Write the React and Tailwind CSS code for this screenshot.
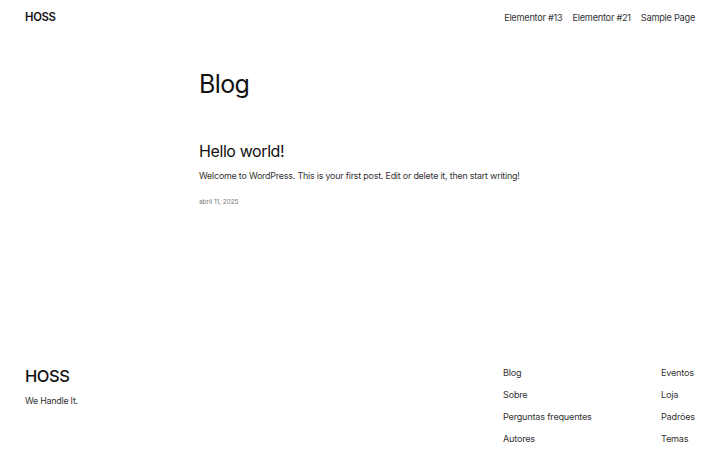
export default function App() {
  const footerA = ["Blog", "Sobre", "Perguntas frequentes", "Autores"];
  const footerB = ["Eventos", "Loja", "Padrões", "Temas"];

  return (
    <div className="w-[720px] h-[450px] bg-white text-[#111] overflow-hidden" style={{ fontFamily: "Inter, 'Noto Sans', sans-serif" }}>
      {/* Header */}
      <header className="flex items-center justify-between px-[25px] h-[35px]">
        <span className="text-[11.3px] font-semibold tracking-tight">HOSS</span>
        <nav className="flex gap-[10px] text-[9.2px] tracking-[-0.25px] text-[#333]">
          <a>Elementor #13</a>
          <a>Elementor #21</a>
          <a>Sample Page</a>
        </nav>
      </header>

      {/* Main */}
      <main className="w-[322px] mx-auto pt-[30px] h-[329px]">
        <h1 className="text-[25px] leading-[38px] font-normal tracking-[-0.6px]">Blog</h1>
        <div className="mt-[36px]">
          <h2 className="text-[16px] leading-[24px] font-normal tracking-[-0.4px]">Hello world!</h2>
          <p className="mt-[6px] text-[8.9px] leading-[14px] tracking-[-0.2px] whitespace-nowrap text-[#333]">
            Welcome to WordPress. This is your first post. Edit or delete it, then start writing!
          </p>
          <p className="mt-[15px] text-[6.4px] text-[#777]">abril 11, 2025</p>
        </div>
      </main>

      {/* Footer */}
      <footer className="flex justify-between px-[25px]">
        <div>
          <div className="text-[16.5px] font-medium leading-[24px] tracking-tight">HOSS</div>
          <div className="mt-[6px] text-[8.8px] tracking-[-0.2px] text-[#333]">We Handle It.</div>
        </div>
        <div className="flex text-[9.1px] tracking-[-0.2px] text-[#333] pt-[2px]">
          <ul className="flex flex-col gap-[8px] w-[158px]">
            {footerA.map((l) => (
              <li key={l} className="leading-[14px]">{l}</li>
            ))}
          </ul>
          <ul className="flex flex-col gap-[8px] w-[34px]">
            {footerB.map((l) => (
              <li key={l} className="leading-[14px] whitespace-nowrap">{l}</li>
            ))}
          </ul>
        </div>
      </footer>
    </div>
  );
}
